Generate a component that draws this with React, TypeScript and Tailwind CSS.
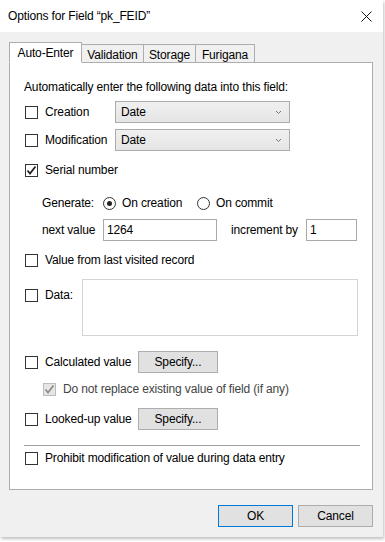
import React from "react";

const font = { fontFamily: '"Liberation Sans", Arial, sans-serif' };

function Check({ checked = false, disabled = false }: { checked?: boolean; disabled?: boolean }) {
  return (
    <div
      className={`w-[13px] h-[13px] shrink-0 border flex items-center justify-center ${
        disabled ? "border-[#bcbcbc] bg-[#e6e6e6]" : "border-[#333333] bg-white"
      }`}
    >
      {checked && (
        <svg width="11" height="11" viewBox="0 0 11 11">
          <path
            d="M1.5 5.5 L4 8.5 L9.5 1.5"
            fill="none"
            stroke={disabled ? "#8f8f8f" : "#222222"}
            strokeWidth="1.8"
          />
        </svg>
      )}
    </div>
  );
}

function Radio({ on = false }: { on?: boolean }) {
  return (
    <div className="w-[13px] h-[13px] shrink-0 rounded-full border border-[#333333] bg-white flex items-center justify-center">
      {on && <div className="w-[5px] h-[5px] rounded-full bg-[#222222]" />}
    </div>
  );
}

function Dropdown() {
  return (
    <div className="w-[175px] h-[22px] border border-[#acacac] bg-[linear-gradient(#f0f0f0,#e5e5e5)] flex items-center justify-between pl-[5px] pr-[7px]">
      <span>Date</span>
      <svg width="7" height="5" viewBox="0 0 7 5">
        <path d="M1 1 L3.5 3.5 L6 1" fill="none" stroke="#7a7a7a" strokeWidth="1" />
      </svg>
    </div>
  );
}

function Btn({ children, w, primary = false }: { children: React.ReactNode; w: string; primary?: boolean }) {
  return (
    <div
      className={`${w} h-[22px] border bg-[#e1e1e1] flex items-center justify-center ${
        primary ? "border-[#0078d7]" : "border-[#adadad]"
      }`}
    >
      {children}
    </div>
  );
}

export default function App() {
  return (
    <div className="w-[385px] h-[542px] bg-white text-[12px] text-black leading-[16px] tracking-[-0.15px]" style={font}>
      <div className="w-[383px] h-[537px] flex flex-col bg-[#f0f0f0] shadow-[1px_2px_3px_rgba(0,0,0,0.25)]">
        {/* Title bar */}
        <div className="h-[32px] bg-white flex items-center justify-between pl-[8px] pr-[11px] shrink-0">
          <span className="text-[12px]">Options for Field “pk_FEID”</span>
          <svg width="11" height="11" viewBox="0 0 11 11">
            <path d="M0.5 0.5 L10.5 10.5 M10.5 0.5 L0.5 10.5" stroke="#111" strokeWidth="1" />
          </svg>
        </div>

        {/* Body */}
        <div className="flex flex-col pl-[9px] pr-[10px] pt-[10px]">
          {/* Tabs */}
          <div className="flex items-end h-[21px] relative z-10">
            <div className="w-[73px] h-[21px] border border-[#adadad] border-b-white bg-white flex items-center justify-center">
              Auto-Enter
            </div>
            <div className="w-[62px] h-[19px] border border-l-0 border-b-0 border-[#adadad] flex items-center justify-center pt-[1px]">
              Validation
            </div>
            <div className="w-[52px] h-[19px] border border-l-0 border-b-0 border-[#adadad] flex items-center justify-center pt-[1px]">
              Storage
            </div>
            <div className="w-[59px] h-[19px] border border-l-0 border-b-0 border-[#adadad] flex items-center justify-center pt-[1px]">
              Furigana
            </div>
          </div>

          {/* Panel */}
          <div className="-mt-[1px] h-[428px] border border-[#adadad] bg-white flex flex-col pl-[14px] pr-[14px]">
            <div className="mt-[16px] h-[16px]">Automatically enter the following data into this field:</div>

            <div className="mt-[6px] h-[22px] flex items-center pl-[1px]">
              <Check />
              <span className="ml-[7px] w-[70px]">Creation</span>
              <Dropdown />
            </div>
            <div className="mt-[6px] h-[22px] flex items-center pl-[1px]">
              <Check />
              <span className="ml-[7px] w-[70px]">Modification</span>
              <Dropdown />
            </div>

            <div className="mt-[11px] h-[16px] flex items-center pl-[1px]">
              <Check checked />
              <span className="ml-[7px]">Serial number</span>
            </div>

            <div className="mt-[17px] h-[16px] flex items-center pl-[18px]">
              <span className="w-[61px]">Generate:</span>
              <Radio on />
              <span className="ml-[6px] w-[75px]">On creation</span>
              <Radio />
              <span className="ml-[6px]">On commit</span>
            </div>

            <div className="mt-[8px] h-[22px] flex items-center pl-[18px]">
              <span className="w-[61px]">next value</span>
              <div className="w-[114px] h-[22px] border border-[#a9a9a9] flex items-center pl-[3px]">1264</div>
              <span className="ml-[14px] w-[75px]">increment by</span>
              <div className="w-[51px] h-[22px] border border-[#a9a9a9] flex items-center pl-[3px]">1</div>
            </div>

            <div className="mt-[11px] h-[16px] flex items-center pl-[1px]">
              <Check />
              <span className="ml-[7px]">Value from last visited record</span>
            </div>

            <div className="mt-[11px] h-[57px] flex items-start pl-[1px]">
              <div className="mt-[8px] flex items-center">
                <Check />
                <span className="ml-[7px]">Data:</span>
              </div>
              <div className="ml-auto w-[276px] h-[57px] border border-[#d4d4d4]" />
            </div>

            <div className="mt-[15px] h-[22px] flex items-center pl-[1px]">
              <Check />
              <span className="ml-[7px] w-[93px]">Calculated value</span>
              <Btn w="w-[80px]">Specify...</Btn>
            </div>

            <div className="mt-[8px] h-[16px] flex items-center pl-[19px]">
              <Check checked disabled />
              <span className="ml-[7px] text-[#444444]">Do not replace existing value of field (if any)</span>
            </div>

            <div className="mt-[11px] h-[22px] flex items-center pl-[1px]">
              <Check />
              <span className="ml-[7px] w-[93px]">Looked-up value</span>
              <Btn w="w-[80px]">Specify...</Btn>
            </div>

            <div className="mt-[15px] h-[1px] bg-[#a0a0a0] -mr-[2px]" />

            <div className="mt-[4px] h-[16px] flex items-center pl-[1px]">
              <Check />
              <span className="ml-[7px]">Prohibit modification of value during data entry</span>
            </div>
          </div>

          {/* Buttons */}
          <div className="mt-[15px] flex justify-end gap-[5px]">
            <Btn w="w-[75px]" primary>OK</Btn>
            <Btn w="w-[75px]">Cancel</Btn>
          </div>
        </div>
      </div>
    </div>
  );
}
